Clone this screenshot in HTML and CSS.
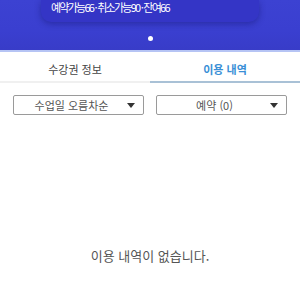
FILE: index.html
```html
<!DOCTYPE html>
<html lang="ko">
<head>
  <meta charset="UTF-8" />
  <meta name="viewport" content="width=device-width, initial-scale=1.0" />
  <title>이용 내역</title>
  <link rel="stylesheet" href="styles.css">
</head>
<body>
  <div id="banner">
    <div class="card">
      <span class="stats">예약가능66 · 취소가능90 · 잔여66</span>
    </div>
    <div class="dots"><span class="dot"></span></div>
  </div>

  <div id="tabs">
    <div class="tab">수강권 정보</div>
    <div class="tab active">이용 내역</div>
  </div>

  <div id="filters">
    <div class="select">
      <span class="label">수업일 오름차순</span>
      <span class="arrow"></span>
    </div>
    <div class="select">
      <span class="label">예약 (0)</span>
      <span class="arrow"></span>
    </div>
  </div>

  <div id="empty">이용 내역이 없습니다.</div>
</body>
</html>
```

FILE: styles.css
```css
body {
  font-family: "Noto Sans CJK KR", "Noto Sans", sans-serif;
  margin: 0;
  padding: 0;
  background: #fff;
  width: 300px;
}

#banner {
  height: 50px;
  background: linear-gradient(180deg, #3c42d2 0%, #3a3fd0 60%, #383cc8 100%);
  border-bottom: 2px solid #b6c4f4;
  display: flex;
  flex-direction: column;
  align-items: center;
}

.card {
  width: 218px;
  height: 22px;
  box-sizing: border-box;
  padding: 0 0 0 10px;
  background: #3435c6;
  border-radius: 0 0 10px 10px;
  box-shadow: 0 2px 6px rgba(20, 20, 110, 0.45);
  display: flex;
  align-items: flex-start;
}

.stats {
  color: #fff;
  font-size: 11px;
  line-height: 14px;
  letter-spacing: -1.75px;
}

.dots {
  margin-top: 14px;
}

.dot {
  display: block;
  width: 5px;
  height: 5px;
  border-radius: 50%;
  background: #fff;
}

#tabs {
  display: flex;
}

.tab {
  flex: 1;
  text-align: center;
  font-size: 11px;
  line-height: 24px;
  padding-top: 5px;
  color: #444;
  border-bottom: 2px solid #f0f0f0;
}

.tab.active {
  color: #3a8fd6;
  font-weight: bold;
  border-bottom-color: #a9c1d6;
}

#filters {
  display: flex;
  justify-content: space-between;
  padding: 12px 13px 0;
}

.select {
  width: 131px;
  height: 20px;
  box-sizing: border-box;
  border: 1px solid #9a9a9a;
  border-radius: 2px;
  display: flex;
  align-items: center;
  padding: 0 8px 0 8px;
}

.label {
  flex: 1;
  text-align: center;
  font-size: 11px;
  color: #555;
}

.arrow {
  width: 0;
  height: 0;
  border-left: 4px solid transparent;
  border-right: 4px solid transparent;
  border-top: 5px solid #333;
  margin-left: 6px;
}

#empty {
  margin-top: 131px;
  text-align: center;
  font-size: 13px;
  color: #555;
}
```
